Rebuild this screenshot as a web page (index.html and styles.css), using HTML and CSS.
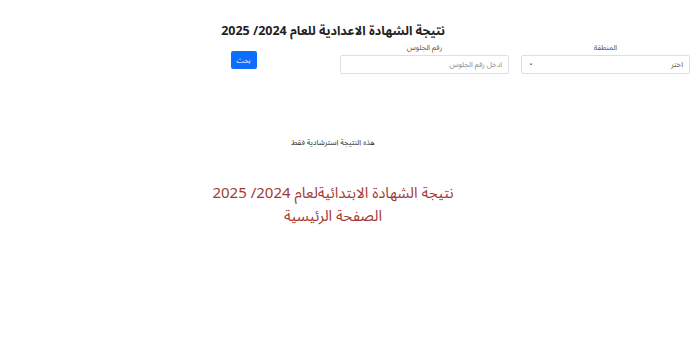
FILE: index.html
```html
<!DOCTYPE html>
<html lang="ar" dir="rtl">
<head>
<meta charset="utf-8">
<title>نتيجة الشهادة الاعدادية</title>
<link rel="stylesheet" href="styles.css">
</head>
<body>
<h1 class="title">نتيجة الشهادة الاعدادية للعام 2024/ 2025</h1>
<form class="search-row">
  <div class="col">
    <label class="field-label">المنطقة</label>
    <div class="select-box"><span>اختر</span><span class="caret">&#8964;</span></div>
  </div>
  <div class="col">
    <label class="field-label">رقم الجلوس</label>
    <div class="input-box"><span class="placeholder">ادخل رقم الجلوس</span></div>
  </div>
  <div class="col col-btn">
    <button type="button" class="btn">بحث</button>
  </div>
</form>
<p class="note">هذه النتيجة استرشادية فقط</p>
<div class="links">
  <p class="red-line">نتيجة الشهادة الابتدائيةلعام 2024/ 2025</p>
  <p class="red-line">الصفحة الرئيسية</p>
</div>
</body>
</html>
```

FILE: styles.css
```css
html, body {
  margin: 0;
  padding: 0;
  background: #ffffff;
}
body {
  direction: rtl;
  font-family: "Noto Sans Arabic", "Open Sans", "DejaVu Sans", sans-serif;
  color: #212529;
  width: 700px;
}
.title {
  margin: 21px 34px 0 0;
  padding: 0;
  text-align: center;
  font-size: 12.5px;
  font-weight: bold;
  line-height: 20px;
  color: #222;
}
.search-row {
  display: flex;
  padding-right: 4px;
  margin-top: 1px;
}
.col {
  width: 169px;
  padding: 0 6px;
  display: flex;
  flex-direction: column;
}
.field-label {
  text-align: center;
  font-size: 7.5px;
  line-height: 12px;
  color: #555;
  margin-bottom: 1px;
}
.select-box, .input-box {
  height: 17px;
  border: 1px solid #dcdfe3;
  border-radius: 2px;
  display: flex;
  align-items: center;
  justify-content: space-between;
  padding: 0 6px;
  font-size: 7.5px;
  color: #555;
}
.placeholder { color: #888; }
.caret {
  font-family: "DejaVu Sans", sans-serif;
  font-size: 7px;
  line-height: 7px;
  margin-top: -3px;
  color: #444;
}
.col-btn {
  align-items: center;
  padding-top: 9px;
}
.btn {
  width: 26px;
  height: 18px;
  border: none;
  border-radius: 2px;
  background: #0d6efd;
  color: #fff;
  font-family: inherit;
  font-size: 7px;
  padding: 0;
}
.note {
  margin: 60px 34px 0 0;
  text-align: center;
  font-size: 7.7px;
  color: #333;
}
.links {
  margin: 31px 34px 0 0;
  text-align: center;
}
.red-line {
  margin: 0;
  font-size: 15px;
  line-height: 23px;
  color: #a23b35;
}
```
